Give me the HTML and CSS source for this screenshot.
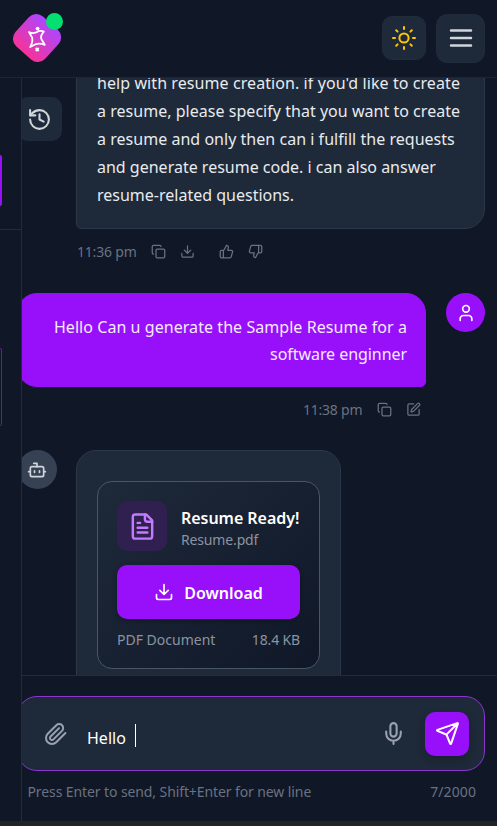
FILE: index.html
```html
<!DOCTYPE html>
<html lang="en">
<head>
<meta charset="utf-8">
<title>Resume Chat</title>
<link rel="stylesheet" href="styles.css">
</head>
<body>
<svg class="sprite" aria-hidden="true">
  <symbol id="copy" viewBox="0 0 24 24"><rect x="8" y="8" width="14" height="14" rx="2"/><path d="M4 16c-1.1 0-2-.9-2-2V4c0-1.1.9-2 2-2h10c1.1 0 2 .9 2 2"/></symbol>
  <symbol id="download" viewBox="0 0 24 24"><path d="M21 15v4a2 2 0 0 1-2 2H5a2 2 0 0 1-2-2v-4M7 10l5 5 5-5M12 15V3"/></symbol>
</svg>
<header class="topbar">
  <div class="logo">
    <div class="logo-tile"></div>
    <svg class="logo-mark" viewBox="0 0 24 24"><path d="M4 6Q8.500 8.500 13.500 5.200Q16.500 4.500 18.800 5.600Q14.800 10 16.600 13.500L19.800 18.800Q14.500 16.800 10.500 18.300L5.200 21Q8 16 7.200 11.800Z"/><circle class="dot" cx="12.600" cy="2.600" r="1.900"/><path d="M10.700 22l3 3M13.700 22l-3 3"/></svg>
    <span class="online"></span>
  </div>
  <div class="actions">
    <button class="tool theme"><svg class="icon" viewBox="0 0 24 24"><circle cx="12" cy="12" r="4.600"/><path d="M12 1v2M12 21v2M4.200 4.200l1.400 1.400M18.400 18.400l1.400 1.400M1 12h2M21 12h2M4.200 19.800l1.400-1.400M18.400 5.600l1.400-1.400"/></svg></button>
    <button class="tool menu"><svg class="icon" viewBox="0 0 24 24"><path d="M4 6h16M4 12h16M4 18h16"/></svg></button>
  </div>
</header>
<div class="shell">
  <aside class="sidebar">
    <div class="side-top"><div class="side-button"></div></div>
    <div class="side-item"></div>
  </aside>
  <main class="chat">
    <section class="messages">
      <button class="history"><svg class="icon" viewBox="0 0 24 24"><path d="M3 12a9 9 0 1 0 9-9 9.750 9.750 0 0 0-6.740 2.740L3 8"/><path d="M3 3v5h5M12 7v5l4 2"/></svg></button>
      <div class="bubble bot-bubble reply">
        <div><span class="l0">help with resume creation. if you'd like to create</span></div>
        <div><span class="l1">a resume, please specify that you want to create</span></div>
        <div><span class="l2">a resume and only then can i fulfill the requests</span></div>
        <div><span class="l3">and generate resume code. i can also answer</span></div>
        <div><span class="l4">resume-related questions.</span></div>
      </div>
      <div class="meta bot-meta">
        <span class="time">11:36 pm</span>
        <svg class="icon"><use href="#copy"/></svg>
        <svg class="icon"><use href="#download"/></svg>
        <svg class="icon like" viewBox="0 0 24 24"><path d="M7 10v12M15 5.880L14 10h5.830a2 2 0 0 1 1.920 2.560l-2.330 8A2 2 0 0 1 17.500 22H4a2 2 0 0 1-2-2v-8a2 2 0 0 1 2-2h2.760a2 2 0 0 0 1.790-1.110L12 2a3.130 3.130 0 0 1 3 3.880Z"/></svg>
        <svg class="icon" viewBox="0 0 24 24"><path d="M17 14V2M9 18.120L10 14H4.170a2 2 0 0 1-1.920-2.560l2.330-8A2 2 0 0 1 6.500 2H20a2 2 0 0 1 2 2v8a2 2 0 0 1-2 2h-2.760a2 2 0 0 0-1.790 1.110L12 22a3.130 3.130 0 0 1-3-3.880Z"/></svg>
      </div>
      <div class="user-row">
        <div class="bubble user-bubble">
          <div><span class="u0">Hello Can u generate the Sample Resume for a</span></div>
          <div><span class="u1">software enginner</span></div>
        </div>
        <div class="avatar user-avatar"><svg class="icon" viewBox="0 0 24 24"><path d="M19 21v-2a4 4 0 0 0-4-4H9a4 4 0 0 0-4 4v2"/><circle cx="12" cy="7" r="4"/></svg></div>
      </div>
      <div class="meta user-meta">
        <span class="time">11:38 pm</span>
        <svg class="icon"><use href="#copy"/></svg>
        <svg class="icon" viewBox="0 0 24 24"><path d="M12 3H5a2 2 0 0 0-2 2v14a2 2 0 0 0 2 2h14a2 2 0 0 0 2-2v-7"/><path d="M18.380 2.620a1 1 0 0 1 3 3l-9.010 9.010a2 2 0 0 1-.850.510l-2.870.840a.500.500 0 0 1-.620-.620l.840-2.870a2 2 0 0 1 .510-.850z"/></svg>
      </div>
      <div class="bot-row">
        <div class="avatar bot-avatar"><svg class="icon" viewBox="0 0 24 24"><path d="M12 8V4H8M2 14h2M20 14h2M15 13v2M9 13v2"/><rect x="4" y="8" width="16" height="12" rx="2"/></svg></div>
        <div class="bubble bot-bubble file-bubble">
          <div class="file-card">
            <div class="file-head">
              <div class="file-icon"><svg class="icon" viewBox="0 0 24 24"><path d="M15 2H6a2 2 0 0 0-2 2v16a2 2 0 0 0 2 2h12a2 2 0 0 0 2-2V7Z"/><path d="M14 2v4a2 2 0 0 0 2 2h4M10 9H8M16 13H8M16 17H8"/></svg></div>
              <div><div class="file-title"><span>Resume Ready!</span></div><div class="file-name"><span>Resume.pdf</span></div></div>
            </div>
            <button class="download"><svg class="icon"><use href="#download"/></svg><span>Download</span></button>
            <div class="file-foot"><span class="kind">PDF Document</span><span class="size">18.4 KB</span></div>
          </div>
        </div>
      </div>
    </section>
    <section class="composer">
      <div class="input-box">
        <svg class="icon clip" viewBox="0 0 24 24"><path d="m21.440 11.050-9.190 9.190a6 6 0 0 1-8.490-8.490l8.570-8.570A4 4 0 1 1 18 8.840l-8.590 8.570a2 2 0 0 1-2.830-2.830l8.490-8.480"/></svg>
        <div class="field"><span>Hello</span><i class="caret"></i></div>
        <svg class="icon mic" viewBox="0 0 24 24"><path d="M12 19v3M19 10v2a7 7 0 0 1-14 0v-2"/><rect x="9" y="2" width="6" height="13" rx="3"/></svg>
        <button class="send"><svg class="icon" viewBox="0 0 24 24"><path d="M14.536 21.686a.500.500 0 0 0 .937-.024l6.500-19a.496.496 0 0 0-.635-.635l-19 6.500a.500.500 0 0 0-.024.937l7.930 3.180a2 2 0 0 1 1.112 1.110zM21.854 2.147l-10.940 10.939"/></svg></button>
      </div>
      <div class="hint"><span class="tip">Press Enter to send, Shift+Enter for new line</span><span class="count">7/2000</span></div>
    </section>
  </main>
</div>
<div class="strip"></div>
</body>
</html>
```
FILE: styles.css
```css
* { box-sizing: border-box; }
body {
  margin: 0;
  width: 497px;
  height: 826px;
  overflow: hidden;
  display: flex;
  flex-direction: column;
  background: #101726;
  color: #e8ebef;
  font: 16px/28px "Noto Sans", "Open Sans", sans-serif;
}
button { border: 0; padding: 0; font: inherit; color: inherit; }
.sprite { display: none; }
.icon { fill: none; stroke: currentColor; stroke-width: 2; stroke-linecap: round; stroke-linejoin: round; flex: none; }

.topbar {
  height: 78px;
  flex: none;
  display: flex;
  align-items: center;
  justify-content: space-between;
  padding: 0 12px 1px 13px;
  border-bottom: 1px solid #1d2634;
}
.logo { position: relative; width: 49px; height: 49px; display: grid; place-items: center; }
.logo-tile { width: 40px; height: 40px; margin-right: 1px; border-radius: 10px; background: linear-gradient(180deg, #ad46ff, #f6339a); transform: rotate(42deg); }
.logo-mark { position: absolute; left: 12px; top: 12px; width: 24px; height: 24px; overflow: visible; fill: none; stroke: #fff; stroke-width: 1.8; stroke-linejoin: round; }
.logo-mark .dot { fill: #fff; stroke: none; }
.online { position: absolute; left: 33px; top: -1px; width: 17px; height: 17px; border-radius: 50%; background: #05df72; }
.actions { display: flex; align-items: center; gap: 10px; }
.tool { display: grid; place-items: center; background: #1e2939; border: 1px solid #212c3b; }
.theme { width: 44px; height: 44px; border-radius: 10px; color: #fdc700; }
.theme .icon { width: 24px; height: 24px; }
.menu { width: 49px; height: 49px; border-radius: 11px; color: #d1d5dc; }
.menu .icon { width: 30px; height: 30px; }

.shell { height: 743px; flex: none; display: flex; }
.sidebar { width: 22px; flex: none; border-right: 1px solid #222c3b; }
.side-top { height: 152px; padding-top: 77px; border-bottom: 1px solid #222c3b; }
.side-button { width: 2px; height: 51px; background: #9810fa; border-radius: 0 2px 2px 0; }
.side-item { width: 2px; height: 78px; margin-top: 118px; border: 1px solid #6f12b8; border-left: 0; border-radius: 0 2px 2px 0; }
.chat { width: 475px; flex: none; display: flex; flex-direction: column; }
.messages { position: relative; height: 597px; overflow: hidden; }
.history { position: absolute; left: -4px; top: 19px; width: 44px; height: 44px; border-radius: 10px; background: #1e2939; color: #d1d5dc; display: grid; place-items: center; }
.history .icon { width: 25px; height: 25px; margin-right: 1px; }
.bubble { border: 1px solid #2c3847; border-radius: 20px; white-space: nowrap; }
.bot-bubble { background: #1e2939; }
.reply { width: 409px; margin: -29px 0 0 54px; padding: 19px 19px 19px 20px; border-radius: 20px 20px 20px 5px; }
.l0 { letter-spacing: .08px; }
.l1 { letter-spacing: .03px; }
.l2 { letter-spacing: .03px; }
.meta { display: flex; align-items: center; height: 20px; color: #6a7282; font-size: 14px; line-height: 20px; }
.time { letter-spacing: -.2px; padding-top: 2px; }
.meta .icon { width: 15px; height: 15px; margin-left: 14.300px; }
.meta .like { margin-left: 24px; }
.bot-meta { margin: 12px 0 0 55px; }
.user-row { display: flex; justify-content: flex-end; gap: 20px; margin: 32px 12px 0 -8px; }
.user-bubble { width: 409px; height: 94px; padding: 20px 18px 18px; background: #9810fa; border-color: #9810fa; border-radius: 20px 20px 5px 20px; text-align: right; line-height: 27px; color: #f5eafe; }
.u0 { letter-spacing: .06px; }
.u1 { letter-spacing: -.06px; }
.avatar { width: 39px; height: 39px; border-radius: 50%; display: grid; place-items: center; flex: none; }
.avatar .icon { width: 20px; height: 20px; }
.user-avatar { background: #9810fa; color: #fff; }
.user-meta { justify-content: flex-end; margin: 12px 76px 0 0; }
.bot-row { display: flex; gap: 19px; margin: 31px 0 0 -4px; }
.bot-avatar { background: #364153; color: #d1d5dc; }
.bot-avatar .icon { margin-right: 1px; }
.file-bubble { width: 265px; height: 260px; padding: 30px 20px; border-radius: 20px; }
.file-card { width: 223px; height: 188px; padding: 19px; border: 1px solid #4a5565; border-radius: 15px; background: linear-gradient(135deg, #1e2939, #101828); }
.file-head { display: flex; gap: 14px; height: 50px; }
.file-icon { width: 50px; height: 50px; border-radius: 10px; display: grid; place-items: center; background: #30204f; color: #c27aff; }
.file-icon .icon { width: 29px; height: 29px; }
.file-title { font-weight: 600; line-height: 24px; padding-top: 5px; color: #fff; letter-spacing: -.04px; }
.file-name { font-size: 14px; line-height: 20px; letter-spacing: -.15px; color: #8b93a1; }
.download { width: 183px; height: 54px; margin-top: 14px; border-radius: 10px; background: #9810fa; color: #fff; font-weight: 600; display: flex; align-items: center; justify-content: center; gap: 10px; box-shadow: 0 2px 5px #0004; }
.download span { padding-top: 2px; }
.download .icon { width: 20px; height: 20px; }
.file-foot { display: flex; justify-content: space-between; margin-top: 11px; font-size: 14px; line-height: 20px; color: #8b93a1; }
.size { letter-spacing: -.15px; }
.composer { height: 146px; border-top: 1px solid #222c3b; padding-top: 20px; overflow: hidden; }
.input-box { width: 468px; height: 75px; margin-left: -5px; border: 1px solid #8c35cf; border-radius: 20px; background: #1e2939; display: flex; align-items: center; padding: 0 15px 0 26px; }
.clip { width: 24px; height: 24px; color: #99a1af; }
.field { display: flex; align-items: center; margin-left: 19px; flex: 1; padding-top: 8px; color: #fff; }
.caret { width: 1px; height: 23px; margin: -4px 0 0 9px; background: #fff; }
.mic { width: 25px; height: 25px; color: #99a1af; margin-right: 19px; }
.send { width: 44px; height: 44px; border-radius: 10px; background: #9810fa; color: #fff; display: grid; place-items: center; box-shadow: 0 4px 8px #0003; }
.send .icon { width: 25px; height: 25px; }
.hint { display: flex; justify-content: space-between; padding: 11px 21px 0 5.500px; font-size: 14px; line-height: 20px; color: #6a7282; }
.tip { letter-spacing: -.1px; }
.count { letter-spacing: .1px; }
.strip { height: 5px; flex: none; background: #222326; }
```
